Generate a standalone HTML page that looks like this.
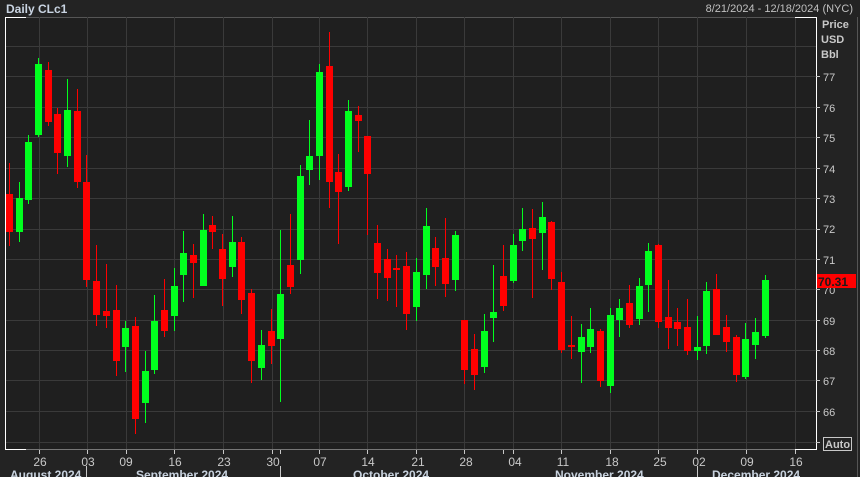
<!DOCTYPE html>
<html><head><meta charset="utf-8"><style>
html,body{margin:0;padding:0;background:#232323;}
svg{display:block;font-family:"Liberation Sans",sans-serif;}
</style></head><body>
<svg width="860" height="477" viewBox="0 0 860 477" xmlns="http://www.w3.org/2000/svg">
<rect width="860" height="477" fill="#232323"/>
<rect x="5" y="17" width="811" height="432" fill="#1f1f1f"/>
<text x="6" y="13" font-size="12" font-weight="bold" fill="#c9d4e2">Daily CLc1</text>
<text x="853" y="12" font-size="11" fill="#c0c0c0" text-anchor="end">8/21/2024 - 12/18/2024 (NYC)</text>
<g stroke="#3a3a3a" stroke-width="1">
<line x1="5" y1="17.5" x2="816" y2="17.5" stroke="#555"/>
<line x1="5" y1="46.5" x2="816" y2="46.5"/><line x1="5" y1="76.5" x2="816" y2="76.5"/><line x1="5" y1="107.5" x2="816" y2="107.5"/><line x1="5" y1="137.5" x2="816" y2="137.5"/><line x1="5" y1="168.5" x2="816" y2="168.5"/><line x1="5" y1="198.5" x2="816" y2="198.5"/><line x1="5" y1="229.5" x2="816" y2="229.5"/><line x1="5" y1="259.5" x2="816" y2="259.5"/><line x1="5" y1="289.5" x2="816" y2="289.5"/><line x1="5" y1="320.5" x2="816" y2="320.5"/><line x1="5" y1="350.5" x2="816" y2="350.5"/><line x1="5" y1="380.5" x2="816" y2="380.5"/><line x1="5" y1="411.5" x2="816" y2="411.5"/><line x1="5" y1="442.5" x2="816" y2="442.5"/>
<line x1="39.5" y1="17" x2="39.5" y2="449"/><line x1="87.5" y1="17" x2="87.5" y2="449"/><line x1="126.5" y1="17" x2="126.5" y2="449"/><line x1="174.5" y1="17" x2="174.5" y2="449"/><line x1="223.5" y1="17" x2="223.5" y2="449"/><line x1="272.5" y1="17" x2="272.5" y2="449"/><line x1="319.5" y1="17" x2="319.5" y2="449"/><line x1="367.5" y1="17" x2="367.5" y2="449"/><line x1="416.5" y1="17" x2="416.5" y2="449"/><line x1="464.5" y1="17" x2="464.5" y2="449"/><line x1="513.5" y1="17" x2="513.5" y2="449"/><line x1="561.5" y1="17" x2="561.5" y2="449"/><line x1="610.5" y1="17" x2="610.5" y2="449"/><line x1="658.5" y1="17" x2="658.5" y2="449"/><line x1="697.5" y1="17" x2="697.5" y2="449"/><line x1="746.5" y1="17" x2="746.5" y2="449"/><line x1="795.5" y1="17" x2="795.5" y2="449"/>
</g>
<line x1="5" y1="449.5" x2="816" y2="449.5" stroke="#777"/>
<g stroke="#fff" stroke-width="1" fill="none">
<polyline points="26,17.5 5.5,17.5 5.5,449.5 26,449.5"/>
<polyline points="795,17.5 816.5,17.5 816.5,449.5 795,449.5"/>
</g>
<line x1="857.5" y1="17" x2="857.5" y2="477" stroke="#555"/>
<g fill="#ff0000">
<rect x="9" y="163" width="1" height="83"/><rect x="6" y="194" width="7" height="38"/>
<rect x="48" y="62" width="1" height="64"/><rect x="45" y="70" width="7" height="52"/>
<rect x="57" y="108" width="1" height="66"/><rect x="54" y="114" width="7" height="39"/>
<rect x="77" y="89" width="1" height="99"/><rect x="74" y="111" width="7" height="71"/>
<rect x="86" y="155" width="1" height="132"/><rect x="83" y="182" width="7" height="98"/>
<rect x="96" y="245" width="1" height="81"/><rect x="93" y="281" width="7" height="34"/>
<rect x="106" y="264" width="1" height="64"/><rect x="103" y="311" width="7" height="5"/>
<rect x="116" y="285" width="1" height="91"/><rect x="113" y="310" width="7" height="51"/>
<rect x="135" y="317" width="1" height="117"/><rect x="132" y="326" width="7" height="93"/>
<rect x="164" y="279" width="1" height="58"/><rect x="161" y="310" width="7" height="21"/>
<rect x="193" y="244" width="1" height="54"/><rect x="190" y="255" width="7" height="8"/>
<rect x="212" y="216" width="1" height="33"/><rect x="209" y="225" width="7" height="7"/>
<rect x="222" y="234" width="1" height="72"/><rect x="219" y="249" width="7" height="30"/>
<rect x="241" y="237" width="1" height="77"/><rect x="238" y="242" width="7" height="58"/>
<rect x="251" y="289" width="1" height="94"/><rect x="248" y="293" width="7" height="68"/>
<rect x="271" y="309" width="1" height="55"/><rect x="268" y="331" width="7" height="15"/>
<rect x="290" y="214" width="1" height="80"/><rect x="287" y="265" width="7" height="22"/>
<rect x="329" y="32" width="1" height="176"/><rect x="326" y="66" width="7" height="116"/>
<rect x="338" y="154" width="1" height="90"/><rect x="335" y="172" width="7" height="20"/>
<rect x="358" y="106" width="1" height="46"/><rect x="355" y="115" width="7" height="6"/>
<rect x="367" y="136" width="1" height="99"/><rect x="364" y="136" width="7" height="38"/>
<rect x="377" y="225" width="1" height="74"/><rect x="374" y="243" width="7" height="30"/>
<rect x="387" y="249" width="1" height="52"/><rect x="384" y="259" width="7" height="19"/>
<rect x="396" y="255" width="1" height="52"/><rect x="393" y="268" width="7" height="2"/>
<rect x="406" y="252" width="1" height="78"/><rect x="403" y="266" width="7" height="48"/>
<rect x="435" y="237" width="1" height="49"/><rect x="432" y="248" width="7" height="19"/>
<rect x="445" y="218" width="1" height="79"/><rect x="442" y="258" width="7" height="26"/>
<rect x="464" y="320" width="1" height="64"/><rect x="461" y="320" width="7" height="50"/>
<rect x="474" y="334" width="1" height="56"/><rect x="471" y="349" width="7" height="26"/>
<rect x="503" y="245" width="1" height="66"/><rect x="500" y="276" width="7" height="30"/>
<rect x="532" y="209" width="1" height="89"/><rect x="529" y="228" width="7" height="11"/>
<rect x="551" y="221" width="1" height="69"/><rect x="548" y="222" width="7" height="57"/>
<rect x="561" y="272" width="1" height="81"/><rect x="558" y="282" width="7" height="68"/>
<rect x="571" y="316" width="1" height="43"/><rect x="568" y="345" width="7" height="2"/>
<rect x="600" y="329" width="1" height="58"/><rect x="597" y="331" width="7" height="50"/>
<rect x="629" y="285" width="1" height="43"/><rect x="626" y="303" width="7" height="22"/>
<rect x="658" y="244" width="1" height="84"/><rect x="655" y="245" width="7" height="77"/>
<rect x="668" y="280" width="1" height="69"/><rect x="665" y="317" width="7" height="11"/>
<rect x="677" y="308" width="1" height="38"/><rect x="674" y="322" width="7" height="7"/>
<rect x="687" y="299" width="1" height="56"/><rect x="684" y="327" width="7" height="24"/>
<rect x="716" y="274" width="1" height="61"/><rect x="713" y="289" width="7" height="46"/>
<rect x="726" y="315" width="1" height="37"/><rect x="723" y="327" width="7" height="15"/>
<rect x="736" y="335" width="1" height="47"/><rect x="733" y="337" width="7" height="38"/>
</g>
<g fill="#00ff1e">
<rect x="19" y="182" width="1" height="60"/><rect x="16" y="198" width="7" height="34"/>
<rect x="28" y="135" width="1" height="69"/><rect x="25" y="142" width="7" height="58"/>
<rect x="38" y="58" width="1" height="79"/><rect x="35" y="64" width="7" height="71"/>
<rect x="67" y="79" width="1" height="88"/><rect x="64" y="110" width="7" height="46"/>
<rect x="125" y="321" width="1" height="51"/><rect x="122" y="328" width="7" height="19"/>
<rect x="145" y="351" width="1" height="72"/><rect x="142" y="371" width="7" height="32"/>
<rect x="154" y="295" width="1" height="79"/><rect x="151" y="321" width="7" height="49"/>
<rect x="174" y="268" width="1" height="63"/><rect x="171" y="286" width="7" height="30"/>
<rect x="183" y="231" width="1" height="71"/><rect x="180" y="253" width="7" height="22"/>
<rect x="203" y="214" width="1" height="72"/><rect x="200" y="230" width="7" height="56"/>
<rect x="232" y="216" width="1" height="61"/><rect x="229" y="242" width="7" height="25"/>
<rect x="261" y="330" width="1" height="50"/><rect x="258" y="345" width="7" height="23"/>
<rect x="280" y="230" width="1" height="172"/><rect x="277" y="294" width="7" height="45"/>
<rect x="300" y="165" width="1" height="109"/><rect x="297" y="176" width="7" height="84"/>
<rect x="309" y="120" width="1" height="65"/><rect x="306" y="156" width="7" height="14"/>
<rect x="319" y="64" width="1" height="116"/><rect x="316" y="72" width="7" height="84"/>
<rect x="348" y="100" width="1" height="91"/><rect x="345" y="111" width="7" height="76"/>
<rect x="416" y="258" width="1" height="63"/><rect x="413" y="272" width="7" height="35"/>
<rect x="426" y="208" width="1" height="81"/><rect x="423" y="226" width="7" height="49"/>
<rect x="455" y="231" width="1" height="60"/><rect x="452" y="235" width="7" height="45"/>
<rect x="484" y="314" width="1" height="59"/><rect x="481" y="331" width="7" height="36"/>
<rect x="493" y="265" width="1" height="77"/><rect x="490" y="312" width="7" height="6"/>
<rect x="513" y="234" width="1" height="49"/><rect x="510" y="245" width="7" height="36"/>
<rect x="522" y="208" width="1" height="43"/><rect x="519" y="229" width="7" height="12"/>
<rect x="542" y="202" width="1" height="68"/><rect x="539" y="217" width="7" height="16"/>
<rect x="581" y="324" width="1" height="59"/><rect x="578" y="337" width="7" height="15"/>
<rect x="590" y="308" width="1" height="45"/><rect x="587" y="329" width="7" height="18"/>
<rect x="610" y="308" width="1" height="85"/><rect x="607" y="315" width="7" height="71"/>
<rect x="619" y="299" width="1" height="38"/><rect x="616" y="308" width="7" height="12"/>
<rect x="639" y="278" width="1" height="47"/><rect x="636" y="286" width="7" height="33"/>
<rect x="648" y="243" width="1" height="69"/><rect x="645" y="251" width="7" height="34"/>
<rect x="697" y="316" width="1" height="44"/><rect x="694" y="347" width="7" height="4"/>
<rect x="706" y="282" width="1" height="72"/><rect x="703" y="291" width="7" height="55"/>
<rect x="745" y="323" width="1" height="56"/><rect x="742" y="339" width="7" height="38"/>
<rect x="755" y="318" width="1" height="41"/><rect x="752" y="332" width="7" height="13"/>
<rect x="765" y="275" width="1" height="63"/><rect x="762" y="280" width="7" height="56"/>
</g>
<g font-size="11" fill="#c8c8c8">
<text x="822" y="28" font-weight="bold">Price</text>
<text x="821" y="43" font-weight="bold">USD</text>
<text x="821" y="58" font-weight="bold">Bbl</text>
<text x="823" y="81">77</text><text x="823" y="112">76</text><text x="823" y="142">75</text><text x="823" y="173">74</text><text x="823" y="203">73</text><text x="823" y="233">72</text><text x="823" y="264">71</text><text x="823" y="294">70</text><text x="823" y="325">69</text><text x="823" y="355">68</text><text x="823" y="385">67</text><text x="823" y="416">66</text>
</g>
<g stroke="#c8c8c8"><line x1="816" y1="76.5" x2="820" y2="76.5"/><line x1="816" y1="107.5" x2="820" y2="107.5"/><line x1="816" y1="137.5" x2="820" y2="137.5"/><line x1="816" y1="168.5" x2="820" y2="168.5"/><line x1="816" y1="198.5" x2="820" y2="198.5"/><line x1="816" y1="229.5" x2="820" y2="229.5"/><line x1="816" y1="259.5" x2="820" y2="259.5"/><line x1="816" y1="289.5" x2="820" y2="289.5"/><line x1="816" y1="320.5" x2="820" y2="320.5"/><line x1="816" y1="350.5" x2="820" y2="350.5"/><line x1="816" y1="380.5" x2="820" y2="380.5"/><line x1="816" y1="411.5" x2="820" y2="411.5"/><line x1="816" y1="442.5" x2="820" y2="442.5"/></g>
<rect x="817" y="274" width="39" height="14" fill="#ff0000"/>
<text x="818" y="286" font-size="12" font-weight="bold" fill="#1a1a1a">70.31</text>
<rect x="823.5" y="437.5" width="28" height="13" fill="none" stroke="#c8c8c8"/>
<text x="825" y="448" font-size="11" font-weight="bold" fill="#c8c8c8">Auto</text>
<g stroke="#c8c8c8"><line x1="39.5" y1="450" x2="39.5" y2="454"/><line x1="87.5" y1="450" x2="87.5" y2="454"/><line x1="126.5" y1="450" x2="126.5" y2="454"/><line x1="174.5" y1="450" x2="174.5" y2="454"/><line x1="223.5" y1="450" x2="223.5" y2="454"/><line x1="272.5" y1="450" x2="272.5" y2="454"/><line x1="280.5" y1="450" x2="280.5" y2="454"/><line x1="319.5" y1="450" x2="319.5" y2="454"/><line x1="367.5" y1="450" x2="367.5" y2="454"/><line x1="416.5" y1="450" x2="416.5" y2="454"/><line x1="464.5" y1="450" x2="464.5" y2="454"/><line x1="503.5" y1="450" x2="503.5" y2="454"/><line x1="513.5" y1="450" x2="513.5" y2="454"/><line x1="561.5" y1="450" x2="561.5" y2="454"/><line x1="610.5" y1="450" x2="610.5" y2="454"/><line x1="658.5" y1="450" x2="658.5" y2="454"/><line x1="697.5" y1="450" x2="697.5" y2="454"/><line x1="746.5" y1="450" x2="746.5" y2="454"/><line x1="795.5" y1="450" x2="795.5" y2="454"/>
<line x1="86.5" y1="466" x2="86.5" y2="477"/><line x1="280.5" y1="466" x2="280.5" y2="477"/><line x1="697.5" y1="466" x2="697.5" y2="477"/></g>
<g font-size="12" fill="#c8c8c8" text-anchor="middle">
<text x="40" y="466">26</text><text x="88" y="466">03</text><text x="126" y="466">09</text><text x="175" y="466">16</text><text x="224" y="466">23</text><text x="273" y="466">30</text><text x="320" y="466">07</text><text x="368" y="466">14</text><text x="418" y="466">21</text><text x="466" y="466">28</text><text x="515" y="466">04</text><text x="563" y="466">11</text><text x="612" y="466">18</text><text x="660" y="466">25</text><text x="699" y="466">02</text><text x="747" y="466">09</text><text x="796" y="466">16</text>
</g>
<g font-size="12" font-weight="bold" fill="#c8d2de">
<text x="10" y="479">August 2024</text><text x="136" y="479">September 2024</text><text x="353" y="479">October 2024</text><text x="555" y="479">November 2024</text><text x="712" y="479">December 2024</text>
</g>
</svg>
</body></html>
